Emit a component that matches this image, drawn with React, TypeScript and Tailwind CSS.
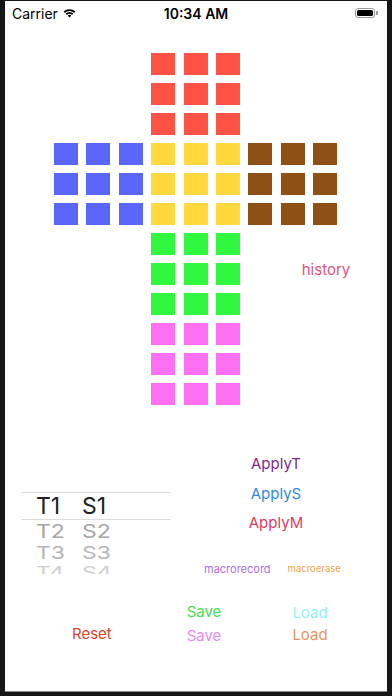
import React from 'react'

// ── cube net ─────────────────────────────────────────────────────

const RED = 'bg-[#ff5245]'
const BLUE = 'bg-[#5a66f9]'
const YELLOW = 'bg-[#ffd93d]'
const BROWN = 'bg-[#8f5015]'
const GREEN = 'bg-[#30f83f]'
const PINK = 'bg-[#ff70f2]'

function cellColor(r: number, c: number): string | null {
  if (r < 3) return c >= 3 && c <= 5 ? RED : null
  if (r < 6) return c < 3 ? BLUE : c < 6 ? YELLOW : BROWN
  if (r < 9) return c >= 3 && c <= 5 ? GREEN : null
  return c >= 3 && c <= 5 ? PINK : null
}

function CubeNet() {
  const cells: React.ReactNode[] = []
  for (let r = 0; r < 12; r++) {
    for (let c = 0; c < 9; c++) {
      if (r === 7 && c === 7) continue // history label sits here
      const color = cellColor(r, c)
      cells.push(<div key={`${r}-${c}`} className={`w-[24px] h-[22px] ${color ?? ''}`} />)
    }
  }
  return (
    <div className="ml-[49px] mt-[28px] grid grid-cols-[repeat(9,24px)] auto-rows-[22px] gap-x-[8.4px] gap-y-[8px]">
      {cells}
      <div className="col-start-8 row-start-8 ml-[21px] -mt-[1px] text-[15px] leading-[16px] text-[#e0557a] whitespace-nowrap self-start">
        history
      </div>
    </div>
  )
}

// ── status bar ───────────────────────────────────────────────────

function StatusBar() {
  return (
    <div className="h-[24px] grid grid-cols-3 items-center px-[7px] text-[14px] text-black">
      <div className="flex items-center gap-[5px]">
        <span>Carrier</span>
        <svg width="13" height="10" viewBox="0 0 13 10">
          <path d="M0.6 3.6 A8.5 8.5 0 0 1 12.4 3.6 L11.1 4.9 A6.7 6.7 0 0 0 1.9 4.9 Z" fill="#000" />
          <path d="M2.6 5.6 A5.6 5.6 0 0 1 10.4 5.6 L9.1 6.9 A3.8 3.8 0 0 0 3.9 6.9 Z" fill="#000" />
          <path d="M4.6 7.6 A2.7 2.7 0 0 1 8.4 7.6 L6.5 9.6 Z" fill="#000" />
        </svg>
      </div>
      <div className="text-center font-semibold">10:34 AM</div>
      <div className="flex justify-end items-center pr-[2px]">
        <div className="w-[20px] h-[10px] rounded-[3px] border border-[#9a9a9a] p-[1px]">
          <div className="w-full h-full bg-black rounded-[1.5px]" />
        </div>
        <div className="w-[1.5px] h-[4px] bg-[#9a9a9a] rounded-r-[1px] ml-[1px]" />
      </div>
    </div>
  )
}

// ── picker ───────────────────────────────────────────────────────

function PickerRow({ t, s, className }: { t: string; s: string; className: string }) {
  return (
    <div className={`flex items-center pl-[15px] text-[23px] leading-none ${className}`}>
      <span className="w-[46px]">{t}</span>
      <span>{s}</span>
    </div>
  )
}

function Picker() {
  return (
    <div className="ml-[16px] mt-[87px] w-[150px] h-[82px] overflow-hidden">
      <div className="h-[28px] border-y border-[#dcdcdc] flex items-center">
        <PickerRow t="T1" s="S1" className="text-[#222]" />
      </div>
      <div className="h-[23px] flex items-center">
        <PickerRow t="T2" s="S2" className="text-[#a5a5a5] scale-y-[0.82] origin-center" />
      </div>
      <div className="h-[20px] flex items-center">
        <PickerRow t="T3" s="S3" className="text-[#b5b5b5] scale-y-[0.76] origin-center" />
      </div>
      <div className="h-[18px] flex items-center">
        <PickerRow t="T4" s="S4" className="text-[#cfcfcf] scale-y-[0.7] origin-center" />
      </div>
    </div>
  )
}

// ── main ─────────────────────────────────────────────────────────

export default function App() {
  return (
    <div className="w-[392px] h-[696px] bg-[#161616] pl-[5px] pr-[5px] pt-[1px] pb-[4px]" style={{ fontFamily: 'Inter, "Liberation Sans", sans-serif' }}>
      <div className="w-[382px] h-[691px] bg-white border-b border-[#8a8a8a] overflow-hidden">
        <StatusBar />
        <CubeNet />

        <div className="flex">
          <div className="w-[166px] shrink-0">
            <Picker />
            <div className="ml-[67px] mt-[50px] text-[15px] leading-[20px] text-[#d9432e]">Reset</div>
          </div>

          <div className="flex-1 pr-[6px] text-[15px] leading-[20px]">
            <div className="mt-[49px] text-center text-[#7e2a88]">ApplyT</div>
            <div className="mt-[10px] text-center text-[#2d8bdf]">ApplyS</div>
            <div className="mt-[9px] text-center text-[#e03a62]">ApplyM</div>

            <div className="mt-[29px] flex items-center pl-[33px] gap-[17px] leading-[14px]">
              <span className="text-[11px] text-[#b06ee6]">macrorecord</span>
              <span className="text-[9.5px] text-[#efa54a]">macroerase</span>
            </div>

            <div className="mt-[26px] flex gap-[40px]">
              <div className="w-[66px] text-center text-[#45e050]">Save</div>
              <div className="w-[66px] text-center text-[#93f2f4] mt-[1px]">Load</div>
            </div>
            <div className="mt-[3px] flex gap-[40px]">
              <div className="w-[66px] text-center text-[#e68af2]">Save</div>
              <div className="w-[66px] text-center text-[#e8955a] -mt-[1px]">Load</div>
            </div>
          </div>
        </div>
      </div>
    </div>
  )
}
